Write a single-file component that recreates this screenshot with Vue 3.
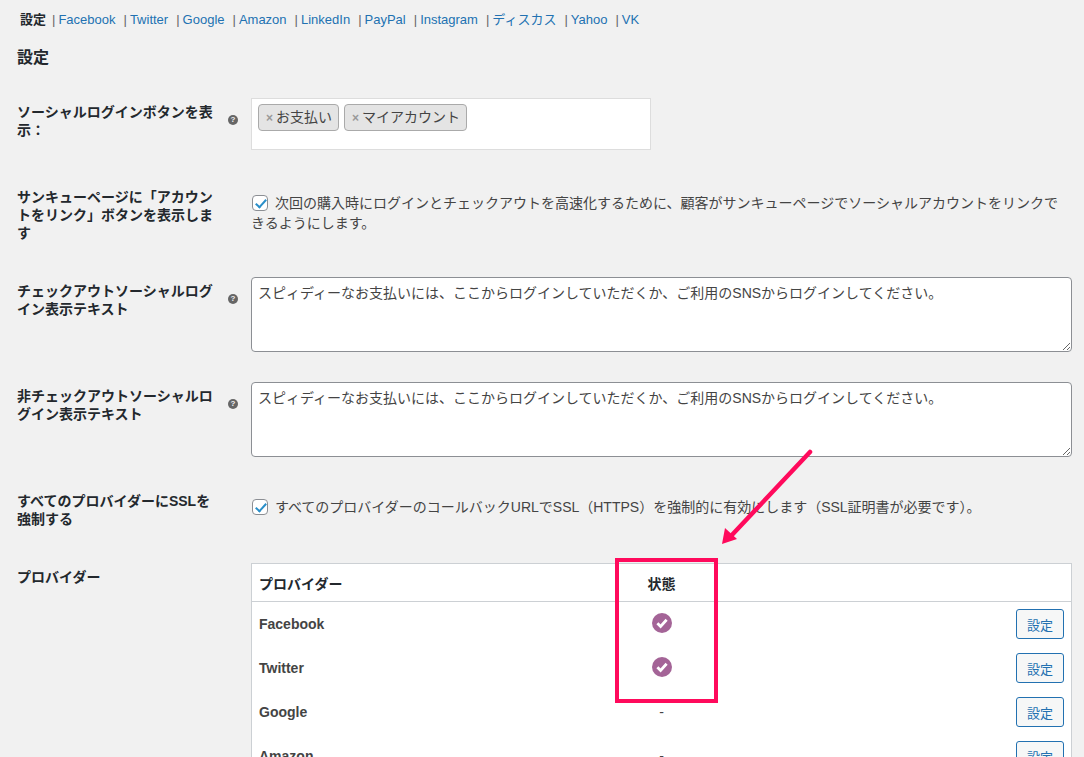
<script setup>
import { ref } from 'vue'

const tabs = ['Facebook', 'Twitter', 'Google', 'Amazon', 'LinkedIn', 'PayPal', 'Instagram', 'ディスカス', 'Yahoo', 'VK']

const message = 'スピィディーなお支払いには、ここからログインしていただくか、ご利用のSNSからログインしてください。'
const checkoutText = ref(message)
const otherText = ref(message)

const thanksLink = ref(true)
const forceSsl = ref(true)

const providers = [
  { name: 'Facebook', enabled: true },
  { name: 'Twitter', enabled: true },
  { name: 'Google', enabled: false },
  { name: 'Amazon', enabled: false }
]
</script>

<template>
  <div class="page">
    <ul class="tabs">
      <li class="tab current">設定</li>
      <li v-for="tab in tabs" :key="tab" class="tab">
        <span class="sep">|</span><a href="#">{{ tab }}</a>
      </li>
    </ul>

    <h2 class="title">設定</h2>

    <div class="row row-tags">
      <div class="label">ソーシャルログインボタンを表示：</div>
      <div class="help"><span class="help-tip">?</span></div>
      <div class="field">
        <div class="tag-box">
          <span class="tag"><b>×</b>お支払い</span>
          <span class="tag"><b>×</b>マイアカウント</span>
        </div>
      </div>
    </div>

    <div class="row">
      <div class="label">サンキューページに「アカウントをリンク」ボタンを表示します</div>
      <div class="help"></div>
      <div class="field">
        <label class="check-line">
          <input v-model="thanksLink" type="checkbox" />
          次回の購入時にログインとチェックアウトを高速化するために、顧客がサンキューページでソーシャルアカウントをリンクできるようにします。
        </label>
      </div>
    </div>

    <div class="row">
      <div class="label">チェックアウトソーシャルログイン表示テキスト</div>
      <div class="help"><span class="help-tip">?</span></div>
      <div class="field">
        <textarea v-model="checkoutText" class="text-input"></textarea>
      </div>
    </div>

    <div class="row">
      <div class="label">非チェックアウトソーシャルログイン表示テキスト</div>
      <div class="help"><span class="help-tip">?</span></div>
      <div class="field">
        <textarea v-model="otherText" class="text-input"></textarea>
      </div>
    </div>

    <div class="row">
      <div class="label">すべてのプロバイダーにSSLを強制する</div>
      <div class="help"></div>
      <div class="field">
        <label class="check-line">
          <input v-model="forceSsl" type="checkbox" />
          すべてのプロバイダーのコールバックURLでSSL（HTTPS）を強制的に有効にします（SSL証明書が必要です）。
        </label>
      </div>
    </div>

    <div class="row">
      <div class="label">プロバイダー</div>
      <div class="help"></div>
      <div class="field">
        <div class="providers">
          <div class="providers-head">
            <span>プロバイダー</span>
            <span class="status">状態</span>
          </div>
          <div v-for="item in providers" :key="item.name" class="provider">
            <span class="provider-name">{{ item.name }}</span>
            <span class="status">
              <svg v-if="item.enabled" class="status-on" viewBox="0 0 20 20" width="20" height="20">
                <circle cx="10" cy="10" r="10" fill="#a46497" />
                <path d="M5.4 10.2l3.2 3.2 6-6.6" fill="none" stroke="#fff" stroke-width="2.8" />
              </svg>
              <template v-else>-</template>
            </span>
            <button class="config-btn" type="button">設定</button>
          </div>
        </div>
      </div>
    </div>

    <!-- 注釈（矢印と枠） -->
    <svg class="arrow" viewBox="0 0 100 100" width="100" height="100">
      <path d="M88 3L9 87" fill="none" stroke="#ff0a5c" stroke-width="4.5" stroke-linecap="round" />
      <path d="M0 95L3 79L15 90Z" fill="#ff0a5c" />
    </svg>
    <div class="mark"></div>
  </div>
</template>

<style>
html,
body {
  background: #f1f1f1;
  overflow: hidden;
}
</style>

<style scoped>
.page {
  position: relative;
  box-sizing: border-box;
  width: 1084px;
  height: 757px;
  overflow: hidden;
  padding: 0 12px 0 17px;
  background: #f1f1f1;
  color: #444;
  font-family: "Liberation Sans", "Noto Sans CJK JP", sans-serif;
  font-size: 14px;
}

.tabs {
  display: flex;
  margin: 0;
  padding: 11px 0 0 3px;
  list-style: none;
  font-size: 13px;
  line-height: 17px;
}

.tab {
  margin-right: 8px;
}

.current {
  margin-right: 6px;
  color: #23282d;
  font-weight: 600;
}

.sep {
  margin-right: 3px;
  color: #666;
}

.tab a {
  color: #2271b1;
  text-decoration: none;
}

.title {
  margin: 0;
  padding-top: 19px;
  color: #23282d;
  font-size: 16px;
  font-weight: 600;
  line-height: 22px;
  height: 26px;
}

.row {
  display: grid;
  grid-template-columns: 200px 34px 1fr;
}

.label {
  padding: 20px 0;
  color: #23282d;
  font-weight: 600;
  line-height: 18px;
}

.help {
  padding: 32px 0 0 11px;
}

.help-tip {
  display: block;
  width: 10px;
  height: 10px;
  border-radius: 50%;
  background: #666;
  color: #f1f1f1;
  font-size: 8px;
  font-weight: 700;
  line-height: 10px;
  text-align: center;
}

.field {
  padding: 15px 0;
}

.row-tags {
  margin-top: 10px;
  height: 85px;
}

.tag-box {
  box-sizing: border-box;
  display: flex;
  align-items: flex-start;
  gap: 5px;
  width: 400px;
  height: 52px;
  padding: 5px 6px;
  border: 1px solid #ddd;
  background: #fff;
}

.tag {
  box-sizing: border-box;
  height: 27px;
  padding: 0 6px 0 7px;
  border: 1px solid #aaa;
  border-radius: 4px;
  background: #e4e4e4;
  line-height: 25px;
}

.tag b {
  margin-right: 3px;
  color: #999;
  font-size: 12px;
}

.check-line {
  display: block;
  padding: 10px 12px 0 0;
  line-height: 20px;
}

.check-line input {
  appearance: none;
  box-sizing: border-box;
  position: relative;
  width: 16px;
  height: 16px;
  margin: 0 3px 0 1px;
  border: 1px solid #8c8f94;
  border-radius: 4px;
  background: #fff;
  vertical-align: -3px;
}

.check-line input:checked::after {
  content: "";
  position: absolute;
  left: 4.5px;
  top: 0.5px;
  width: 4px;
  height: 9px;
  border: solid #2a8fc9;
  border-width: 0 2.5px 2.5px 0;
  transform: rotate(42deg);
}

.text-input {
  display: block;
  box-sizing: border-box;
  width: 100%;
  height: 75px;
  margin: 0;
  padding: 5px 6px;
  border: 1px solid #8c8f94;
  border-radius: 4px;
  background: #fff;
  color: #444;
  font: inherit;
  line-height: 20px;
  outline: none;
}

.providers {
  border: 1px solid #ccd0d4;
  background: #fff;
}

.providers-head,
.provider {
  display: grid;
  grid-template-columns: 1fr 66px 1fr;
  align-items: center;
  padding: 0 7px;
}

.providers-head {
  height: 37px;
  border-bottom: 1px solid #ccd0d4;
  color: #23282d;
  font-weight: 600;
}

.provider {
  height: 44px;
}

.provider-name {
  font-weight: 600;
}

.status {
  display: flex;
  justify-content: center;
  align-items: center;
}

.status-on {
  display: block;
  margin-bottom: 2px;
}

.config-btn {
  justify-self: end;
  box-sizing: border-box;
  width: 48px;
  height: 30px;
  padding: 0;
  border: 1px solid #2271b1;
  border-radius: 3px;
  background: #f6f7f7;
  color: #2271b1;
  font: inherit;
  font-size: 13px;
}

.arrow {
  position: absolute;
  left: 722px;
  top: 449px;
}

.mark {
  position: absolute;
  left: 615px;
  top: 558px;
  box-sizing: border-box;
  width: 103px;
  height: 145px;
  border: 4px solid #ff0a5c;
}
</style>
